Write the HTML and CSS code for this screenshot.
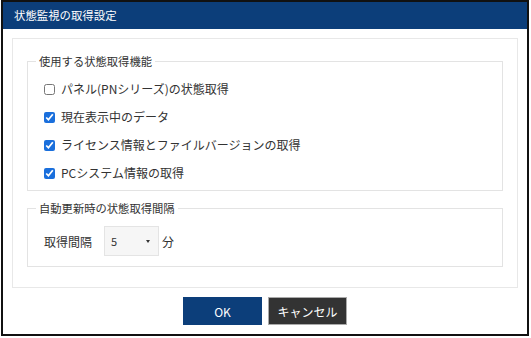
FILE: index.html
```html
<!DOCTYPE html>
<html lang="ja">
<head>
<meta charset="utf-8">
<link rel="stylesheet" href="styles.css">
</head>
<body>
<div class="dialog">
  <div class="title">状態監視の取得設定</div>
  <div class="body">
    <div class="panel">
      <fieldset class="group">
        <legend>使用する状態取得機能</legend>
        <div class="opts">
          <label class="opt"><input type="checkbox"><span>パネル(PNシリーズ)の状態取得</span></label>
          <label class="opt"><input type="checkbox" checked><span>現在表示中のデータ</span></label>
          <label class="opt"><input type="checkbox" checked><span>ライセンス情報とファイルバージョンの取得</span></label>
          <label class="opt"><input type="checkbox" checked><span>PCシステム情報の取得</span></label>
        </div>
      </fieldset>
      <fieldset class="group group2">
        <legend>自動更新時の状態取得間隔</legend>
        <div class="row">
          <span class="lbl">取得間隔</span>
          <div class="select"><span class="val">5</span><span class="caret"></span></div>
          <span class="unit">分</span>
        </div>
      </fieldset>
    </div>
    <div class="buttons">
      <button class="btn ok">OK</button>
      <button class="btn cancel">キャンセル</button>
    </div>
  </div>
</div>
</body>
</html>
```
FILE: styles.css
```css
* { box-sizing: border-box; }
html, body { margin: 0; padding: 0; background: #fff; }
body {
  font-family: "Noto Sans CJK JP", "Noto Sans", sans-serif;
  color: #333;
}
.dialog {
  margin-left: 1px;
  width: 528px;
  height: 336px;
  border: 2px solid #111;
  display: flex;
  flex-direction: column;
}
.title {
  height: 27px;
  line-height: 27px;
  background: #0c3e7a;
  color: #fff;
  font-size: 11.4px;
  padding-left: 11px;
}
.body {
  padding: 9px 9px 0;
}
.panel {
  border: 1px solid #e8e8e8;
  padding: 14px 14px 20px;
}
.group {
  margin: 0;
  min-width: 0;
  border: 1px solid #e3e3e3;
  padding: 0 8px 3px;
}
.group legend {
  padding: 0 3px;
  font-size: 11.3px;
  line-height: 16px;
  color: #333;
}
.opts {
  margin-top: 6px;
  display: flex;
  flex-direction: column;
}
.opt {
  height: 28px;
  display: flex;
  align-items: center;
  gap: 6px;
  margin-left: 8px;
  font-size: 12px;
  line-height: 16px;
}
.opt input {
  margin: 0;
  width: 11px;
  height: 11px;
  accent-color: #1a6fdc;
}
.group2 {
  margin-top: 9px;
  padding-bottom: 10px;
}
.row {
  margin-top: 10px;
  margin-left: 8px;
  display: flex;
  align-items: center;
  font-size: 12px;
}
.lbl { margin-right: 12px; }
.select {
  width: 55px;
  height: 30px;
  border: 1px solid #e4e4e4;
  background: #f6f6f6;
  display: flex;
  align-items: center;
  justify-content: space-between;
  padding: 0 8px 0 6px;
  font-size: 11px;
}
.caret {
  width: 0;
  height: 0;
  border-top: 3px solid #333;
  border-left: 2.5px solid transparent;
  border-right: 2.5px solid transparent;
}
.unit { margin-left: 3px; }
.buttons {
  margin-top: 9px;
  display: flex;
  justify-content: center;
  gap: 6px;
}
.btn {
  width: 79px;
  height: 28px;
  border: 0;
  font-family: inherit;
  font-size: 12px;
  color: #fff;
  padding: 0;
}
.ok {
  background: #0c3e7a;
  font-weight: normal;
}
.cancel {
  background: #333;
  border: 1px solid #aaa;
}
```
